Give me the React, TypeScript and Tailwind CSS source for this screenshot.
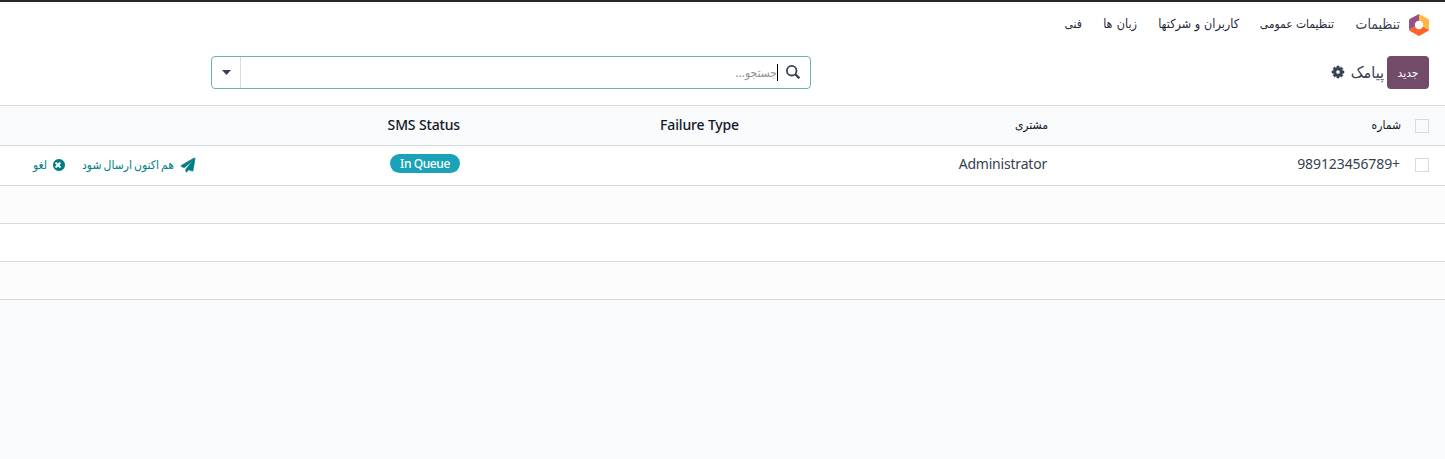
import React from 'react';
import { FaPaperPlane } from 'react-icons/fa';

function Cog() {
  return (
    <svg viewBox="128 128 1536 1536" className="h-3 w-3 overflow-visible fill-[#374151] stroke-[#374151] [stroke-width:70]">
      <path d="M1152 896q0-106-75-181t-181-75-181 75-75 181 75 181 181 75 181-75 75-181zm512-109v222q0 12-8 23t-20 13l-185 28q-19 54-39 91 35 50 107 138 10 12 10 25t-9 23q-27 37-99 108t-94 71q-12 0-26-9l-138-108q-44 23-91 38-16 136-29 186-7 28-36 28h-222q-14 0-24.5-8.5t-11.5-21.5l-28-184q-49-16-90-37l-141 107q-10 9-25 9-14 0-25-11-126-114-165-168-7-10-7-23 0-12 8-23 15-21 51-66.5t54-70.5q-27-50-41-99l-183-27q-13-2-21-12.5t-8-23.5v-222q0-12 8-23t19-13l186-28q14-46 39-92-40-57-107-138-10-12-10-24 0-10 9-23 26-36 98.5-107.5t94.5-71.5q13 0 26 10l138 107q44-23 91-38 16-136 29-186 7-28 36-28h222q14 0 24.5 8.5t11.5 21.5l28 184q49 16 90 37l142-107q9-9 24-9 13 0 25 10 129 119 165 170 7 8 7 22 0 12-8 23-15 21-51 66.5t-54 70.5q26 50 41 98l183 28q13 2 21 12.5t8 23.5z" />
    </svg>
  );
}

function Logo() {
  return (
    <svg viewBox="0 0 20 22" className="relative top-px h-[22px] w-5">
      <path d="M10 0 1 4.8Q0 5.300 0 6.500V15.700L5.500 13 10 8Z" fill="#985184" />
      <path d="M10 0 19 4.800Q20 5.300 20 6.500V15.700L14.500 13 10 8Z" fill="#fbb945" />
      <path d="M0 15.700 5.500 13H14.500L20 15.700Q19.800 16.600 19 17.100L11 21.600Q10 22.200 9 21.600L1 17.100Q.2 16.600 0 15.700Z" fill="#fc6428" />
      <circle cx="10" cy="11" r="4.200" fill="white" />
    </svg>
  );
}

function Cancel() {
  return (
    <svg viewBox="128 128 1536 1536" className="h-3 w-3 fill-[#017e84]">
      <path d="M1149 1122q0-26-19-45l-181-181 181-181q19-19 19-45 0-27-19-46l-90-90q-19-19-46-19-26 0-45 19l-181 181-181-181q-19-19-45-19-27 0-46 19l-90 90q-19 19-19 46 0 26 19 45l181 181-181 181q-19 19-19 45 0 27 19 46l90 90q19 19 46 19 26 0 45-19l181-181 181 181q19 19 45 19 27 0 46-19l90-90q19-19 19-46zm515-226q0 209-103 385.5t-279.5 279.5-385.5 103-385.5-103-279.5-279.5-103-385.5 103-385.5 279.5-279.5 385.5-103 385.5 103 279.5 279.5 103 385.5z" />
    </svg>
  );
}

function Checkbox() {
  return <span className="block h-[14px] w-[14px] shrink-0 border border-[#d8dadd] bg-transparent" />;
}

const menu = [
  { label: 'تنظیمات عمومی', style: 'w-[74px]' },
  { label: 'کاربران و شرکتها', style: 'w-[81px] text-[12.5px] [word-spacing:0.5px]' },
  { label: 'زبان ها', style: 'w-[34px] text-[12.5px] [word-spacing:1px]' },
  { label: 'فنی', style: 'w-4' },
];

export default function App() {
  return (
    <div dir="rtl" className="flex h-[459px] w-[1445px] flex-col overflow-hidden whitespace-nowrap bg-[#f9fafb] font-['Noto_Sans','DejaVu_Sans_Condensed','DejaVu_Sans',sans-serif] text-sm text-[#374151]">
      <header className="flex h-[46px] shrink-0 items-center border-t-2 border-[#262626] bg-white pr-4">
        <Logo />
        <span className="mr-[9px] w-[45px] text-[14px]">تنظیمات</span>
        <nav className="mr-[21px] flex items-baseline gap-[21px] text-[12px] text-[#1f2937]">
          {menu.map((m) => (
            <a key={m.label} className={m.style}>{m.label}</a>
          ))}
        </nav>
      </header>

      <section className="flex h-[59px] shrink-0 items-start bg-white pr-4 pt-[10px]">
        <button className="h-[33px] w-[42px] rounded-[4px] bg-[#714b67] text-[12px] text-white">جدید</button>
        <div className="mr-[3px] flex h-[33px] w-[52px] items-center justify-between">
          <span className="w-[35px] text-[16px]">پیامک</span>
          <span className="mb-px"><Cog /></span>
        </div>
        <div className="mr-[521px] flex h-[33px] w-[600px] items-center rounded-[4px] border border-[#6cb3b0]">
          <svg viewBox="0 0 14 14" className="mb-px mr-[10px] h-[14px] w-[14px] fill-none stroke-[#374151]">
            <circle cx="5.700" cy="5.700" r="4.800" strokeWidth="1.800" />
            <path d="m9.300 9.300 4 4" strokeWidth="2.300" />
          </svg>
          <span className="mr-2 h-[17px] w-px bg-black" />
          <span className="grow text-[12px] text-[#8f949b]">جستجو...</span>
          <span className="flex h-full w-[29px] items-center justify-center border-r border-[#d8dadd]">
            <svg viewBox="0 0 9 5" className="h-[5px] w-[9px] fill-[#374151]"><path d="M0 0h9L4.500 5Z" /></svg>
          </span>
        </div>
      </section>

      <main className="shrink-0 border-t border-[#d8dadd]">
        <div className="flex h-10 items-center border-b border-[#d8dadd] pr-4 text-[#111827]">
          <Checkbox />
          <span className="mb-[2px] mr-[14px] w-[353px] text-[12px]">شماره</span>
          <span className="mb-[2px] w-[309px] text-[12px]">مشتری</span>
          <span className="mb-[2px] w-[279px] text-[14px] font-medium tracking-[-0.15px]">Failure Type</span>
          <span className="mb-[2px] text-[14px] font-medium tracking-[-0.15px]">SMS Status</span>
        </div>
        <div className="flex h-10 items-center border-b border-[#d8dadd] bg-white pr-4">
          <span className="mb-[2px]"><Checkbox /></span>
          <span dir="ltr" className="mb-[4px] mr-[15px] w-[353px] text-right text-[14px] tracking-[-0.1px]">989123456789+</span>
          <span className="mb-[4px] w-[587px] text-[14px] tracking-[-0.2px]">Administrator</span>
          <span className="mb-[4px] flex h-[19px] w-[70px] items-center justify-center rounded-full bg-[#1aa2b8] text-[12px] font-medium tracking-[-0.4px] text-white">In Queue</span>
          <div className="mb-px mr-[195px] flex items-center text-[#017e84]">
            <FaPaperPlane className="h-[14px] w-[14px] overflow-visible stroke-current [stroke-width:24]" />
            <span className="mb-px mr-[7px] w-[91px] text-[12px] [word-spacing:-1px]">هم اکنون ارسال شود</span>
            <span className="mr-[18px]"><Cancel /></span>
            <span className="mb-px mr-[6px] w-[14px] text-[12px]">لغو</span>
          </div>
        </div>
        <div className="h-[38px] border-b border-[#d8dadd] bg-[#fcfcfc]" />
        <div className="h-[38px] border-b border-[#d8dadd] bg-white" />
        <div className="h-[38px] border-b border-[#d8dadd] bg-[#fcfcfc]" />
      </main>
    </div>
  );
}
